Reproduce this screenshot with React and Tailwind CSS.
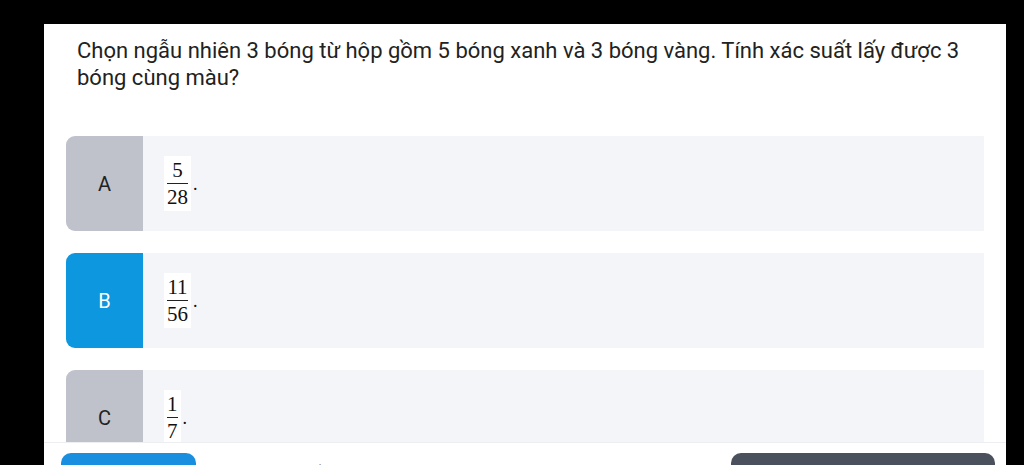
import React from "react";

function Fraction({ num, den }) {
  return (
    <div className="flex items-center">
      <div
        className="flex flex-col items-center bg-white px-[3px] py-[3px] text-[#111] leading-none"
        style={{ fontFamily: '"Liberation Serif", "Times New Roman", serif' }}
      >
        <span className="text-[21px] leading-[22px]">{num}</span>
        <span className="block h-[1.5px] w-full bg-[#222] my-[2px]" />
        <span className="text-[21px] leading-[22px]">{den}</span>
      </div>
      <span className="ml-[2px] text-[18px] leading-none text-[#111]" style={{ fontFamily: '"Liberation Serif", serif' }}>.</span>
    </div>
  );
}

function Option({ letter, num, den, active }) {
  return (
    <div className="flex h-[95px] shrink-0 rounded-l-[9px] overflow-hidden bg-[#f4f5f9]">
      <div
        className={
          "flex w-[77px] shrink-0 items-center justify-center text-[20px] " +
          (active ? "bg-[#0c97de] text-white" : "bg-[#bfc2ca] text-[#222]")
        }
      >
        {letter}
      </div>
      <div className="flex items-center pl-[21px]">
        <Fraction num={num} den={den} />
      </div>
    </div>
  );
}

export default function App() {
  return (
    <div
      className="h-[465px] w-[1024px] overflow-hidden bg-black pl-[44px] pr-[18px] pt-[24px]"
      style={{ fontFamily: 'Roboto, "Liberation Sans", Arial, sans-serif' }}
    >
      <div className="flex h-[441px] flex-col bg-white">
        <div className="flex h-[418px] shrink-0 flex-col overflow-hidden px-[22px]">
          <p className="shrink-0 pl-[11px] pr-[8px] pt-[13px] text-[22px] leading-[27px] text-[#222]">
            Chọn ngẫu nhiên 3 bóng từ hộp gồm 5 bóng xanh và 3 bóng vàng. Tính xác suất lấy được 3 bóng cùng màu?
          </p>
          <div className="mt-[45px] flex flex-col gap-[22px]">
            <Option letter="A" num="5" den="28" />
            <Option letter="B" num="11" den="56" active />
            <Option letter="C" num="1" den="7" />
          </div>
        </div>
        <div className="flex min-h-0 flex-1 items-start overflow-hidden border-t border-[#eceef2] pl-[17px] pr-[11px] pt-[10px]">
          <div className="h-[30px] w-[135px] shrink-0 rounded-[10px] bg-[#1a8fe0]" />
          <div className="ml-[52px] pt-[9px] text-[14px] text-[#333]">Thảo luận về bài</div>
          <div className="ml-auto h-[30px] w-[264px] shrink-0 rounded-[10px] bg-[#4a505c]" />
        </div>
      </div>
    </div>
  );
}
